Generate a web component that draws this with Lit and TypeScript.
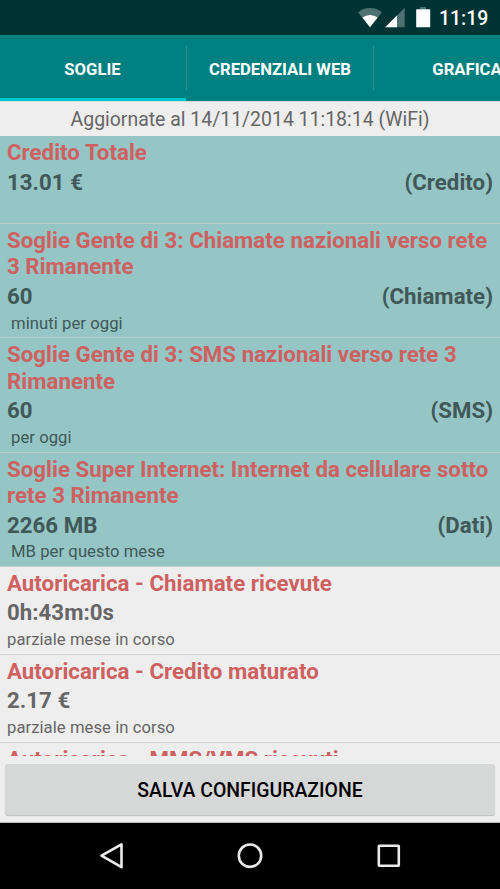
import { LitElement, html, css, nothing } from "lit";
import { customElement } from "lit/decorators.js";
import { classMap } from "lit/directives/class-map.js";

interface Entry {
  title: string;
  value?: string;
  kind?: string;
  note?: string;
  indent?: boolean;
  active?: boolean;
}

const ENTRIES: Entry[] = [
  { title: "Credito Totale", value: "13.01 €", kind: "(Credito)", active: true },
  { title: "Soglie Gente di 3: Chiamate nazionali verso rete 3 Rimanente", value: "60", kind: "(Chiamate)", note: "minuti per oggi", indent: true, active: true },
  { title: "Soglie Gente di 3: SMS nazionali verso rete 3 Rimanente", value: "60", kind: "(SMS)", note: "per oggi", indent: true, active: true },
  { title: "Soglie Super Internet: Internet da cellulare sotto rete 3 Rimanente", value: "2266 MB", kind: "(Dati)", note: "MB per questo mese", indent: true, active: true },
  { title: "Autoricarica - Chiamate ricevute", value: "0h:43m:0s", note: "parziale mese in corso" },
  { title: "Autoricarica - Credito maturato", value: "2.17 €", note: "parziale mese in corso" },
  { title: "Autoricarica - MMS/VMS ricevuti" },
];

@customElement("app-root")
export class AppRoot extends LitElement {
  static styles = css`
    :host {
      display: flex;
      flex-direction: column;
      width: 500px;
      height: 889px;
      overflow: hidden;
      background: #eeeeee;
      font-family: Roboto, sans-serif;
    }
    .status {
      flex: none;
      height: 35px;
      box-sizing: border-box;
      background: #003333;
      display: flex;
      padding-left: 357px;
      color: #fff;
    }
    .status svg { flex: none; width: 82px; height: 35px; }
    .clock { font-size: 19.45px; font-weight: 500; line-height: 37px; }
    .tabs {
      flex: none;
      display: flex;
      width: 560px;
      height: 66px;
      background: #008080;
      color: #fff;
      font-size: 16.67px;
      font-weight: 700;
    }
    .tab {
      flex: none;
      box-sizing: border-box;
      width: 187px;
      display: grid;
      place-items: center;
      padding-top: 2px;
      padding-right: 1px;
      white-space: nowrap;
    }
    .tab.selected {
      width: 186px;
      margin-right: 1px;
      padding-top: 5px;
      border-bottom: 3px solid #00c8c8;
    }
    .divider { flex: none; width: 1px; height: 44px; margin: 11px 0 0 -1px; background: #2a9090; }
    .updated {
      flex: none;
      height: 35px;
      box-sizing: border-box;
      border-top: 1px solid #d3dddd;
      text-align: center;
      color: #666;
      font-size: 19.45px;
      line-height: 35px;
      white-space: nowrap;
    }
    .list { flex: none; height: 620px; overflow: hidden; }
    .row {
      box-sizing: border-box;
      min-height: 88px;
      padding: 2.9px 7px 3.65px;
      border-bottom: 1px solid #d2d2d2;
      color: #666;
    }
    .row.active { background: #95c5c5; border-bottom-color: #bdcccc; color: #405858; }
    .title, .line { font-size: 22.22px; font-weight: 700; line-height: 25.9px; letter-spacing: 0.04px; }
    .title { color: #cf6060; margin-right: -6px; line-height: 26.35px; letter-spacing: 0.045px; }
    .line { display: flex; justify-content: space-between; margin-top: 4.3px; }
    .note { font-size: 16.67px; line-height: 20px; margin-top: 3.9px; min-height: 20px; letter-spacing: 0.05px; }
    .note.indent { padding-left: 4px; }
    .footer { flex: none; box-sizing: border-box; height: 67px; padding: 8px 5px 0; border-bottom: 1px solid #b7bbbb; }
    .save {
      display: block;
      width: 100%;
      height: 51px;
      border: 0;
      border-radius: 3px;
      background: #d6d8d7;
      box-shadow: 0 1px 1px rgba(0, 0, 0, 0.2);
      color: #000;
      font: 500 19.45px/51px Roboto, sans-serif;
      padding: 1px 0 0;
    }
    .nav { flex: 1; background: #000; display: flex; justify-content: center; }
    .nav svg { width: 500px; height: 66px; fill: none; stroke: #ececec; stroke-width: 2.6; }
  `;

  private row(e: Entry) {
    return html`<div class=${classMap({ row: true, active: !!e.active })}>
      <div class="title">${e.title}</div>
      ${e.value
        ? html`<div class="line"><span>${e.value}</span>${e.kind ? html`<span>${e.kind}</span>` : nothing}</div>
            <div class=${classMap({ note: true, indent: !!e.indent })}>${e.note ?? nothing}</div>`
        : nothing}
    </div>`;
  }

  render() {
    return html`
      <div class="status">
        <svg viewBox="357 0 82 35">
          <path fill="#4d7070" d="M370 27.3 358 12.4Q363 8 370 8T382 12.4Z" />
          <path fill="#fff" d="M370 27.3 362.4 17.5Q365.8 15 370 15T377.6 17.5Z" />
          <path fill="#4d7070" d="M404.7 7.8V27.3H385.2Z" />
          <path fill="#fff" d="M397 15.5V27.3H385.2Z" />
          <path fill="#4d7070" d="M420 7h6v2.4h-6z" />
          <path fill="#fff" d="M416.8 9.3h12.8q.6 0 .6.6V26.7q0 .6-.6.6H416.8q-.6 0-.6-.6V9.9q0-.6.6-.6Z" />
        </svg>
        <span class="clock">11:19</span>
      </div>
      <div class="tabs">
        <div class="tab selected">SOGLIE</div>
        <div class="divider"></div>
        <div class="tab">CREDENZIALI WEB</div>
        <div class="divider"></div>
        <div class="tab">GRAFICA</div>
      </div>
      <div class="updated">Aggiornate al 14/11/2014 11:18:14 (WiFi)</div>
      <div class="list">${ENTRIES.map((e) => this.row(e))}</div>
      <div class="footer"><button class="save">SALVA CONFIGURAZIONE</button></div>
      <div class="nav">
        <svg viewBox="0 823 500 66">
          <path stroke-linejoin="round" d="M101.5 855.7 121.5 844.3V867.2Z" />
          <circle cx="250" cy="855.7" r="11.2" />
          <rect x="378.8" y="845.7" width="20" height="20" rx=".7" />
        </svg>
      </div>
    `;
  }
}
